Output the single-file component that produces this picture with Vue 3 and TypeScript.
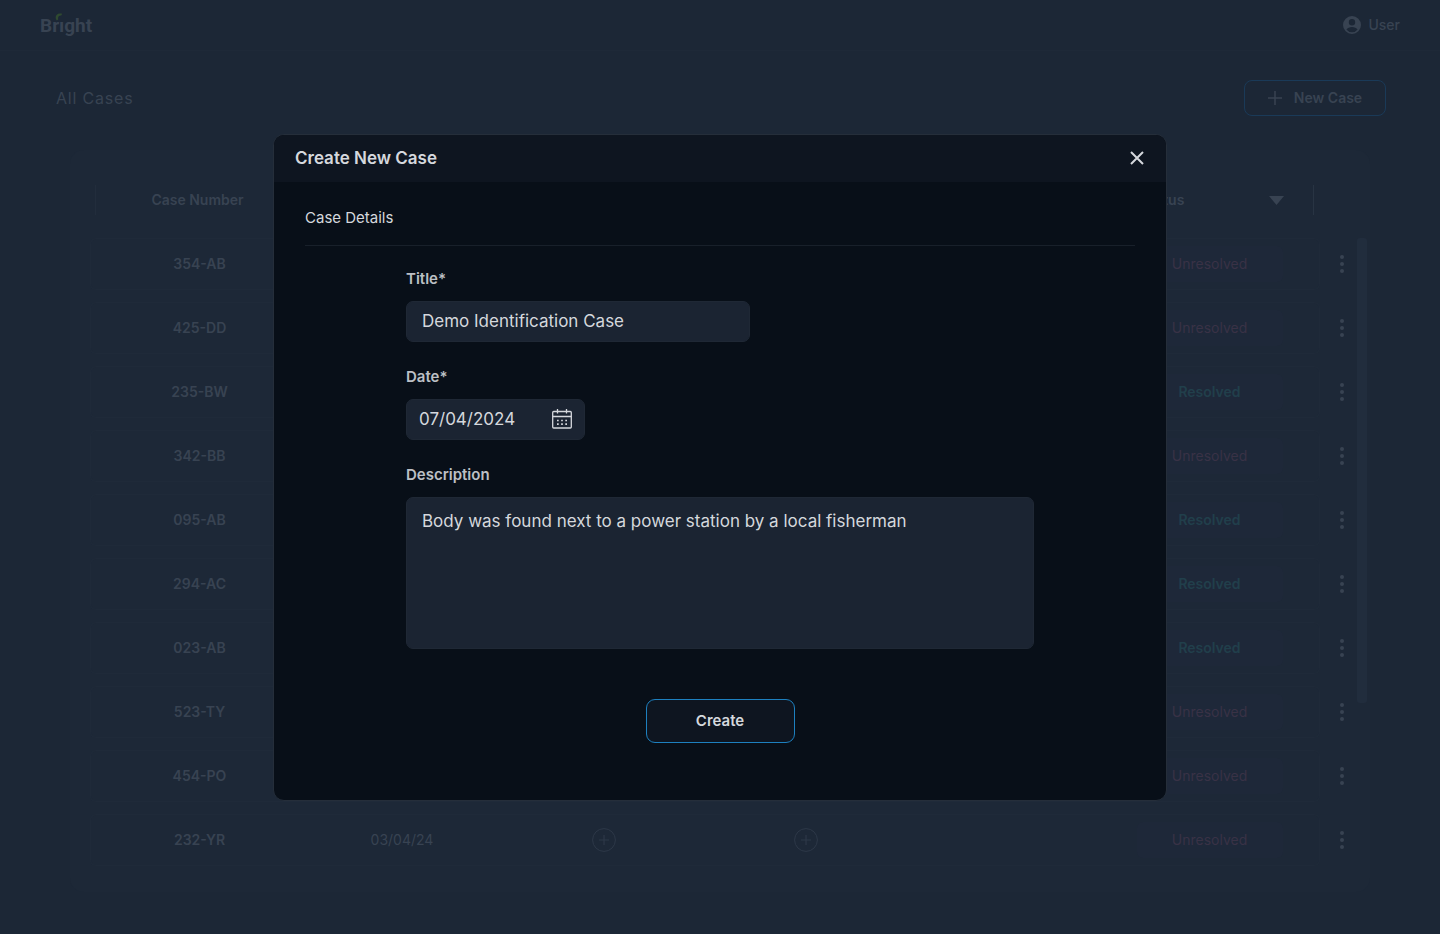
<script setup lang="ts">
import { ref } from 'vue'

type Status = 'Unresolved' | 'Resolved'
interface CaseRow {
  id: string
  status: Status
  date?: string
}

const cases: CaseRow[] = [
  { id: '354-AB', status: 'Unresolved' },
  { id: '425-DD', status: 'Unresolved' },
  { id: '235-BW', status: 'Resolved' },
  { id: '342-BB', status: 'Unresolved' },
  { id: '095-AB', status: 'Resolved' },
  { id: '294-AC', status: 'Resolved' },
  { id: '023-AB', status: 'Resolved' },
  { id: '523-TY', status: 'Unresolved' },
  { id: '454-PO', status: 'Unresolved' },
  { id: '232-YR', status: 'Unresolved', date: '03/04/24' },
]

const open = ref(true)
const title = ref('Demo Identification Case')
const date = ref('07/04/2024')
const description = ref('Body was found next to a power station by a local fisherman')
</script>

<template>
  <div class="page">
    <header class="topbar">
      <a class="logo" href="#" aria-label="Bright">
        Brıght
        <svg class="leaf" width="8" height="8" viewBox="0 0 8 8" aria-hidden="true">
          <path d="M1.800 7.500C-1 4 1.500-.8 7.200.8L6.200 2.400C3.800 2.200 2.600 4 3.200 6.400Z" fill="#2f4a30" />
        </svg>
      </a>
      <button class="user" type="button">
        <svg width="20" height="20" viewBox="0 0 20 20" aria-hidden="true">
          <path
            fill="currentColor"
            fill-rule="evenodd"
            d="M10 1a9 9 0 1 0 0 18 9 9 0 0 0 0-18Zm0 3a3.200 3.200 0 1 1 0 6.400A3.200 3.200 0 0 1 10 4Zm0 8c2.500 0 4.600 1 5.600 2.400a7 7 0 0 1-11.200 0C5.400 13 7.500 12 10 12Z"
          />
        </svg>
        User
      </button>
    </header>

    <main class="content">
      <div class="heading">
        <h1>All Cases</h1>
        <button class="new-case" type="button" @click="open = true">
          <svg width="14" height="14" viewBox="0 0 14 14" aria-hidden="true">
            <path d="M7 0v14M0 7h14" stroke="currentColor" stroke-width="1.500" />
          </svg>
          New Case
        </button>
      </div>

      <section class="panel">
        <table class="cases">
          <colgroup>
            <col class="edge" />
            <col span="4" />
            <col class="edge" />
            <col class="menu" />
          </colgroup>
          <thead>
            <tr>
              <th class="first" scope="col">Case Number</th>
              <td></td>
              <td></td>
              <td></td>
              <td></td>
              <th class="last" scope="col">
                <div class="sort">
                  Status
                  <svg width="15" height="9" viewBox="0 0 15 9" aria-hidden="true">
                    <path d="M0 0h15L7.500 9Z" fill="currentColor" />
                  </svg>
                </div>
              </th>
              <td></td>
            </tr>
          </thead>
          <tbody>
            <tr v-for="row in cases" :key="row.id">
              <th scope="row">{{ row.id }}</th>
              <td>{{ row.date }}</td>
              <td v-for="n in 2" :key="n">
                <button class="add" type="button" aria-label="Add">
                  <svg width="24" height="24" viewBox="0 0 24 24" aria-hidden="true">
                    <g fill="none" stroke="currentColor">
                      <circle cx="12" cy="12" r="11.400" />
                      <path d="M12 7v10M7 12h10" stroke-width="1.200" />
                    </g>
                  </svg>
                </button>
              </td>
              <td></td>
              <td class="status">
                <span class="pill" :class="row.status.toLowerCase()">{{ row.status }}</span>
              </td>
              <td class="menu">
                <button type="button" aria-label="Case menu">
                  <svg width="4" height="18" viewBox="0 0 4 18" aria-hidden="true">
                    <g fill="currentColor">
                      <circle cx="2" cy="2" r="2" />
                      <circle cx="2" cy="9" r="2" />
                      <circle cx="2" cy="16" r="2" />
                    </g>
                  </svg>
                </button>
              </td>
            </tr>
          </tbody>
        </table>
        <div class="scroll"></div>
      </section>
    </main>

    <div v-if="open" class="overlay">
      <form class="modal" role="dialog" aria-labelledby="dialog-title" @submit.prevent>
        <div class="modal-head">
          <h2 id="dialog-title">Create New Case</h2>
          <button class="close" type="button" aria-label="Close" @click="open = false">
            <svg width="14" height="14" viewBox="0 0 14 14" aria-hidden="true">
              <path d="M1 1l12 12M13 1L1 13" stroke="currentColor" stroke-width="2" />
            </svg>
          </button>
        </div>
        <div class="modal-body">
          <h3>Case Details</h3>
          <div class="fields">
            <div class="field">
              <label for="title">Title*</label>
              <input id="title" v-model="title" class="box title" type="text" />
            </div>
            <div class="field">
              <label for="date">Date*</label>
              <div class="box date">
                <input id="date" v-model="date" type="text" />
                <svg width="20" height="20" viewBox="0 0 20 20" aria-hidden="true">
                  <g fill="none" stroke="currentColor" stroke-width="1.300">
                    <rect x=".7" y="2.500" width="18.600" height="16.500" rx="1" />
                    <path d="M.7 7.500h18.600M5.500 0v4.500M14.500 0v4.500" />
                    <path d="M5 11.500h10M5 15.200h10" stroke-width="1.700" stroke-dasharray="1.700 2.450" />
                  </g>
                </svg>
              </div>
            </div>
            <div class="field">
              <label for="description">Description</label>
              <textarea id="description" v-model="description" class="box description"></textarea>
            </div>
          </div>
          <button class="create" type="submit">Create</button>
        </div>
      </form>
    </div>
  </div>
</template>

<style>
body {
  margin: 0;
  background: #1c2736;
}
</style>

<style scoped>
.page {
  min-height: 100vh;
  box-sizing: border-box;
  background: #1c2736;
  color: #384352;
  font-family: Inter, 'Liberation Sans', sans-serif;
  font-size: 14px;
  line-height: 20px;
}
.page *,
.page *::before {
  box-sizing: border-box;
}
h1,
h2,
h3 {
  margin: 0;
}
button,
input,
textarea {
  font: inherit;
  color: inherit;
  background: none;
  border: 0;
  padding: 0;
  margin: 0;
  outline: 0;
}
svg {
  display: block;
  flex: none;
}
.topbar {
  display: flex;
  align-items: center;
  justify-content: space-between;
  height: 51px;
  padding: 0 40px;
  border-bottom: 1px solid #1e2938;
}
.logo {
  position: relative;
  padding-top: 2px;
  color: #384352;
  font: 700 19px/24px Roboto, sans-serif;
  text-decoration: none;
}
.leaf {
  position: absolute;
  left: 15px;
  top: 1px;
}
.user {
  display: flex;
  align-items: center;
  gap: 6px;
  font-weight: 500;
}
.heading {
  display: flex;
  align-items: center;
  justify-content: space-between;
  padding: 29px 54px 34px 56px;
}
h1 {
  font-size: 16px;
  font-weight: 400;
  letter-spacing: 0.05em;
}
.new-case {
  display: flex;
  align-items: center;
  justify-content: center;
  gap: 12px;
  width: 142px;
  height: 36px;
  border: 1px solid #1a3a58;
  border-radius: 8px;
  font-weight: 600;
}
.panel {
  display: flex;
  margin: 0 70px;
  padding: 22px 3px 14px 20px;
  border-radius: 14px;
  background: #1d2837;
}
.cases {
  flex: 1;
  width: 100%;
  table-layout: fixed;
  border-collapse: separate;
  border-spacing: 0 12px;
  margin-top: -10px;
  text-align: center;
}
.edge {
  width: 211px;
}
th,
td {
  padding: 0;
}
th {
  font-weight: 600;
}
thead tr {
  height: 52px;
}
.first,
.last {
  position: relative;
}
.first {
  padding-left: 4px;
}
.first::before,
.last::before {
  content: '';
  position: absolute;
  top: 11px;
  left: 5px;
  height: 30px;
  border-left: 1px solid #222d3c;
}
.last::before {
  left: auto;
  right: 6px;
  border-color: #283443;
}
.sort {
  display: flex;
  align-items: center;
  justify-content: space-between;
  padding: 0 36px 0 32px;
}
tbody tr {
  height: 52px;
}
tbody th,
tbody td {
  height: 52px;
  border: solid #1f2a39;
  border-width: 1px 0;
}
tbody th {
  padding-left: 7px;
  border-left-width: 1px;
  border-radius: 6px 0 0 6px;
}
tbody .status {
  padding-right: 9px;
  border-right-width: 1px;
  border-radius: 0 6px 6px 0;
}
.menu {
  width: 37px;
}
tbody .menu {
  border: 0;
  padding-left: 7px;
}
.menu button {
  display: block;
  margin: 0 auto;
}
.add {
  display: inline-block;
  color: #2d3848;
  vertical-align: middle;
}
.pill {
  display: inline-block;
  width: 146px;
  padding: 8px 0;
  border-radius: 6px;
  background: #1e2839;
}
.unresolved {
  color: #393246;
}
.resolved {
  color: #213f4b;
  font-weight: 600;
}
.scroll {
  flex: none;
  width: 10px;
  height: 465px;
  margin-top: 66px;
  border-radius: 3px;
  background: #212d3d;
}
.overlay {
  position: fixed;
  inset: 0;
  display: flex;
  align-items: center;
  justify-content: center;
}
.modal {
  width: 894px;
  max-width: 100%;
  overflow: hidden;
  border: 1px solid #252e3a;
  border-radius: 11px;
  background: #080f18;
  color: #d5d8dd;
}
.modal-head {
  display: flex;
  align-items: center;
  justify-content: space-between;
  height: 47px;
  padding: 0 22px 0 21px;
  background: #0e1520;
}
h2 {
  font-size: 17px;
  font-weight: 600;
}
.modal-body {
  display: flex;
  flex-direction: column;
  padding: 26px 31px 57px;
}
h3 {
  padding-bottom: 17px;
  border-bottom: 1px solid #18202a;
  font-size: 15px;
  font-weight: 400;
}
.fields {
  display: flex;
  flex-direction: column;
  gap: 25px;
  padding: 23px 101px 0;
}
.field {
  display: flex;
  flex-direction: column;
  align-items: flex-start;
  gap: 12px;
}
label {
  color: #bcc0c5;
  font-size: 15px;
  font-weight: 600;
}
.box {
  height: 41px;
  border: 1px solid #1f2835;
  border-radius: 7px;
  background: #1b2432;
  font-size: 17px;
}
.title {
  width: 344px;
  padding: 0 15px;
}
.date {
  display: flex;
  align-items: center;
  justify-content: space-between;
  width: 179px;
  padding: 0 12px;
}
.date input {
  width: 110px;
}
.description {
  display: block;
  width: 100%;
  height: 152px;
  padding: 13px 15px;
  resize: none;
}
.create {
  align-self: center;
  width: 149px;
  height: 44px;
  margin-top: 50px;
  border: 1px solid #1d80bf;
  border-radius: 9px;
  background: #0e1520;
  font-size: 15px;
  font-weight: 600;
}
</style>
